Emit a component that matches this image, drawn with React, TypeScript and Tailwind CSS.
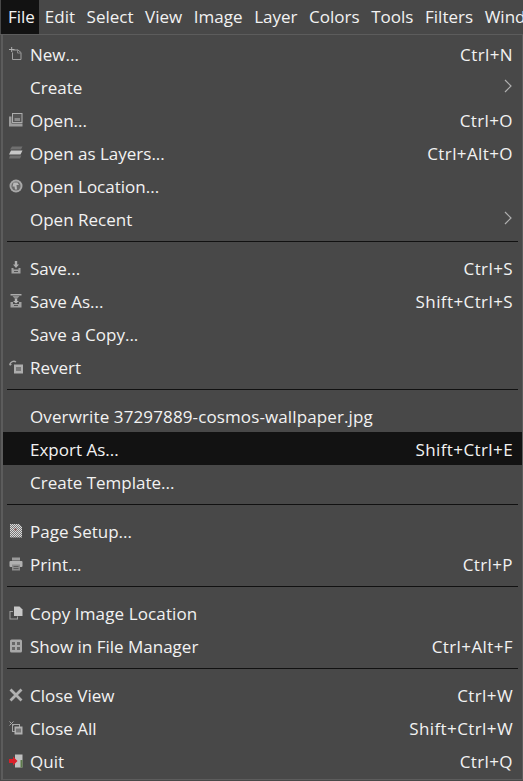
import React from "react";

function Ico({ children }: { children?: React.ReactNode }) {
  return (
    <svg width="14" height="14" viewBox="0 0 14 14" className="shrink-0">
      {children}
    </svg>
  );
}

const icons: Record<string, React.ReactNode> = {
  new: (
    <Ico>
      <path d="M3.5 3H9L12 5.500V12.500H3.500V5.500" fill="none" stroke="#a0a0a0" />
      <path d="M0 2.500H5.500M2.700 0V5" stroke="#b0b0b0" />
      <path d="M8.500 2.500V6H12" fill="none" stroke="#8a8a8a" />
    </Ico>
  ),
  open: (
    <Ico>
      <path d="M0 3.500H2.500V10.500H13.500V13.500H0Z" fill="#9c9c9c" />
      <rect x="3.500" y="0.500" width="9.500" height="9" fill="#555" stroke="#adadad" />
      <rect x="5.500" y="5" width="5.500" height="3" fill="#8a8a8a" />
    </Ico>
  ),
  layers: (
    <Ico>
      <path d="M3 0.500H13.500L12 3.500H1Z" fill="#6f6f6f" />
      <path d="M2 4.500H13.500L11.500 8.500H0Z" fill="#c8c8c8" />
      <path d="M1 9.500H12.500L11 12.500H0Z" fill="#6f6f6f" />
    </Ico>
  ),
  location: (
    <Ico>
      <circle cx="7" cy="7" r="6.500" fill="#a8a8a8" />
      <circle cx="7" cy="7" r="4.600" fill="#6a6a6a" />
      <path d="M4.500 3.500H8.500L10 6H7.500L8 10.500H6L5.500 7.500H3.500Z" fill="#b8b8b8" />
    </Ico>
  ),
  save: (
    <Ico>
      <path d="M5.800 0H8.200V3.500H10L7 7L4 3.500H5.800Z" fill="#adadad" />
      <path d="M2.500 7H4.500V8.500H9.500V7H11.500V12.500H2.500Z" fill="#a0a0a0" />
      <rect x="5" y="10" width="4" height="1" fill="#555" />
    </Ico>
  ),
  saveas: (
    <Ico>
      <path d="M1.500 0H12.500V1.500H1.500Z" fill="#adadad" />
      <path d="M3.500 2H10.500L8 5H6Z" fill="#8f8f8f" />
      <path d="M5.800 5H8.200V7H10L7 9.500L4 7H5.800Z" fill="#b8b8b8" />
      <path d="M1.500 8H4V10H10V8H12.500V13.500H1.500Z" fill="#a0a0a0" />
      <rect x="5" y="11" width="4" height="1" fill="#555" />
    </Ico>
  ),
  revert: (
    <Ico>
      <path d="M1 5C1 1.500 5 0.500 7 2" fill="none" stroke="#a8a8a8" strokeWidth="1.300" />
      <path d="M0 3.500L1 6L3 4Z" fill="#a8a8a8" />
      <rect x="5" y="4.500" width="9" height="9" fill="#adadad" />
      <rect x="7" y="7" width="5" height="4" fill="#777" />
    </Ico>
  ),
  setup: (
    <Ico>
      <defs>
        <pattern id="dither" width="2" height="2" patternUnits="userSpaceOnUse">
          <rect width="2" height="2" fill="#dadada" />
          <rect width="1" height="1" fill="#777" />
          <rect x="1" y="1" width="1" height="1" fill="#777" />
        </pattern>
      </defs>
      <path d="M1 0H10L13 3V13.500H1Z" fill="url(#dither)" />
      <circle cx="6.500" cy="5.500" r="1.200" fill="#8a5f5f" />
    </Ico>
  ),
  print: (
    <Ico>
      <rect x="3" y="0.500" width="8" height="3" fill="#9a9a9a" />
      <rect x="0.500" y="4" width="13" height="6" rx="1" fill="#b0b0b0" />
      <rect x="3" y="7.500" width="8" height="6" fill="#8c8c8c" />
      <path d="M4.500 9.500H9.500M4.500 11.500H9.500" stroke="#5c5c5c" />
    </Ico>
  ),
  copy: (
    <Ico>
      <path d="M0.500 5H4V6H1.500V12.500H8V10.500H9V13.500H0.500Z" fill="#a0a0a0" />
      <path d="M5 0.500H10.500L13.500 3.500V10H5Z" fill="#c8c8c8" />
    </Ico>
  ),
  manager: (
    <Ico>
      <rect x="1" y="0.500" width="12" height="13" rx="1.500" fill="#a8a8a8" />
      <rect x="3" y="3" width="3" height="3" fill="#666" />
      <rect x="8" y="3" width="3" height="3" fill="#666" />
      <rect x="3" y="8" width="3" height="3" fill="#666" />
      <rect x="8" y="8" width="3" height="3" fill="#666" />
    </Ico>
  ),
  close: (
    <Ico>
      <path d="M1.500 1.500L12.500 12.500M12.500 1.500L1.500 12.500" stroke="#b0b0b0" strokeWidth="2.800" />
    </Ico>
  ),
  closeall: (
    <Ico>
      <path d="M0.500 0.500L4.500 4.500M4.500 0.500L0.500 4.500" stroke="#a8a8a8" />
      <rect x="3.500" y="3.500" width="7" height="7" fill="none" stroke="#a8a8a8" />
      <rect x="5.500" y="5.500" width="8" height="8" fill="#b0b0b0" />
      <rect x="7" y="7.500" width="5" height="4" fill="#777" />
    </Ico>
  ),
  quit: (
    <Ico>
      <rect x="6" y="0.500" width="7.500" height="13" fill="#c0c0c0" />
      <rect x="11.500" y="6" width="2" height="7.500" fill="#5c7a4a" />
      <path d="M0 5H4V2.500L8.500 7L4 11.500V9H0Z" fill="#d9202a" />
    </Ico>
  ),
};

type Row = {
  label: string;
  icon?: string;
  shortcut?: string;
  arrow?: boolean;
  active?: boolean;
  wide?: boolean;
};

const groups: Row[][] = [
  [
    { label: "New...", icon: "new", shortcut: "Ctrl+N" },
    { label: "Create", arrow: true },
    { label: "Open...", icon: "open", shortcut: "Ctrl+O" },
    { label: "Open as Layers...", icon: "layers", shortcut: "Ctrl+Alt+O" },
    { label: "Open Location...", icon: "location" },
    { label: "Open Recent", arrow: true },
  ],
  [
    { label: "Save...", icon: "save", shortcut: "Ctrl+S" },
    { label: "Save As...", icon: "saveas", shortcut: "Shift+Ctrl+S" },
    { label: "Save a Copy..." },
    { label: "Revert", icon: "revert" },
  ],
  [
    { label: "Overwrite 37297889-cosmos-wallpaper.jpg", wide: true },
    { label: "Export As...", shortcut: "Shift+Ctrl+E", active: true },
    { label: "Create Template..." },
  ],
  [
    { label: "Page Setup...", icon: "setup" },
    { label: "Print...", icon: "print", shortcut: "Ctrl+P" },
  ],
  [
    { label: "Copy Image Location", icon: "copy", wide: true },
    { label: "Show in File Manager", icon: "manager", shortcut: "Ctrl+Alt+F" },
  ],
  [
    { label: "Close View", icon: "close", shortcut: "Ctrl+W" },
    { label: "Close All", icon: "closeall", shortcut: "Shift+Ctrl+W" },
    { label: "Quit", icon: "quit", shortcut: "Ctrl+Q" },
  ],
];

const menus = ["Edit", "Select", "View", "Image", "Layer", "Colors", "Tools", "Filters", "Windows"];

export default function App() {
  return (
    <div className="w-[523px] h-[781px] overflow-hidden bg-[#484848] text-[#f2f2f2] font-['Open_Sans',sans-serif] text-[17px] leading-[33px]">
      <div className="flex h-[35px] whitespace-nowrap pl-px border-b border-[#5c5c5c] overflow-hidden">
        <div className="bg-[#121212] h-[34px] w-[38px] shrink-0 pl-[7px] leading-[34px]">File</div>
        {menus.map((m) => (
          <div key={m} className="px-[5.8px] shrink-0 leading-[34px]">
            {m}
          </div>
        ))}
      </div>
      <div className="ml-px border-l-2 border-r border-b border-[#5c5c5c] h-[745px] pt-[2px]">
        {groups.map((g, i) => (
          <div key={i}>
            {i > 0 && <div className="ml-[4px] mr-[4px] mt-[6px] mb-[9px] h-px bg-[#111111]" />}
            {g.map((r) => (
              <div
                key={r.label}
                className={
                  "flex h-[33px] items-center pl-[6px] pr-[9px] " + (r.active ? "bg-[#121212]" : "")
                }
              >
                <span className="w-[21px] shrink-0 flex items-center">{r.icon ? icons[r.icon] : null}</span>
                <span className={"flex-1 whitespace-nowrap pt-[2px] " + (r.wide ? "tracking-[0.12px]" : "")}>{r.label}</span>
                {r.shortcut && <span className="whitespace-nowrap pt-[2px] tracking-[0.4px]">{r.shortcut}</span>}
                {r.arrow && (
                  <svg width="10" height="14" viewBox="0 0 10 14" className="mb-[2px]">
                    <path d="M2 1L8 7L2 13" fill="none" stroke="#b0b0b0" strokeWidth="1.200" />
                  </svg>
                )}
              </div>
            ))}
          </div>
        ))}
      </div>
    </div>
  );
}
